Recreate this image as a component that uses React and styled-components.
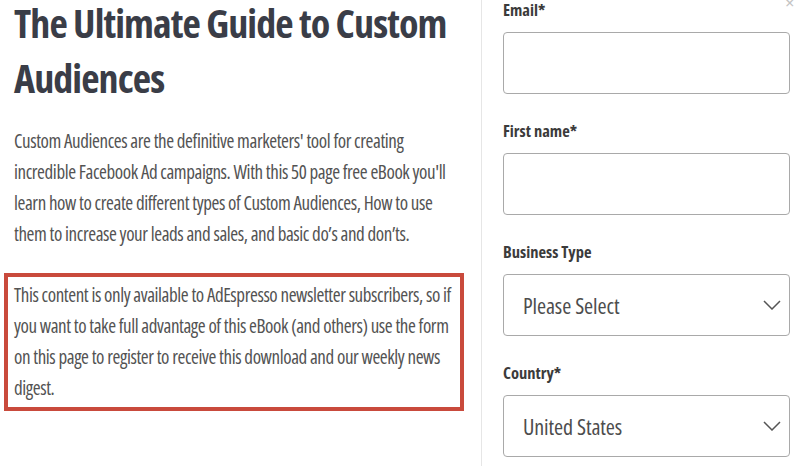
import styled, { createGlobalStyle } from "styled-components";

const Global = createGlobalStyle`
  html, body { margin: 0; background: #fff; }
  body {
    font-family: "Open Sans", "Liberation Sans", sans-serif;
    font-stretch: condensed;
  }
`;

const Page = styled.div`
  width: 800px;
  height: 466px;
  display: flex;
  overflow: hidden;
`;

const Intro = styled.section`
  width: 481px;
  flex-shrink: 0;
  padding-left: 14px;
  box-sizing: border-box;
`;

const Title = styled.h1`
  margin: -5px 0 0;
  font-size: 40px;
  line-height: 55px;
  font-weight: 700;
  letter-spacing: -0.9px;
  color: #3a3d47;
  white-space: nowrap;
`;

const Text = styled.p`
  margin: 0;
  font-size: 19px;
  line-height: 31px;
  letter-spacing: -0.4px;
  color: #535353;
  white-space: nowrap;
`;

const Lead = styled(Text)`
  margin-top: 21px;
`;

const Notice = styled.div`
  width: 460px;
  box-sizing: border-box;
  margin: 23px 0 0 -10px;
  padding: 3px 6px;
  border: 4px solid #c94a3c;
`;

const Form = styled.aside`
  position: relative;
  flex: 1;
  border-left: 1px solid #e6e6e6;
  padding: 0 10px 0 21px;
  display: flex;
  flex-direction: column;
  gap: 27px;
`;

const Close = styled.span`
  position: absolute;
  top: -11px;
  right: 6px;
  font-size: 20px;
  color: #c4c4c4;
`;

const Field = styled.div`
  display: flex;
  flex-direction: column;
  gap: 12px;
`;

const Label = styled.label`
  font-size: 16.5px;
  line-height: 20px;
  font-weight: 700;
  color: #3b3b3b;
`;

const Box = styled.div`
  height: 62px;
  box-sizing: border-box;
  border: 1px solid #a9a9a9;
  border-radius: 4px;
  display: flex;
  align-items: center;
  justify-content: space-between;
  padding: 0 8px 0 19px;
`;

const Value = styled.span`
  font-size: 22px;
  color: #4d4d4d;
  letter-spacing: -0.1px;
`;

const Chevron = () => (
  <svg width="18" height="10" viewBox="0 0 18 10" fill="none">
    <path d="M1 1 L9 9 L17 1" stroke="#555" strokeWidth="1.5" />
  </svg>
);

const fields = [
  { label: "Email*" },
  { label: "First name*" },
  { label: "Business Type", value: "Please Select" },
  { label: "Country*", value: "United States" },
];

export default function App() {
  return (
    <>
      <Global />
      <Page>
        <Intro>
          <Title>
            The Ultimate Guide to Custom
            <br />
            Audiences
          </Title>
          <Lead>
            Custom Audiences are the definitive marketers' tool for creating
            <br />
            incredible Facebook Ad campaigns. With this 50 page free eBook you'll
            <br />
            learn how to create different types of Custom Audiences, How to use
            <br />
            them to increase your leads and sales, and basic do’s and don’ts.
          </Lead>
          <Notice>
            <Text>
              This content is only available to AdEspresso newsletter subscribers, so if
              <br />
              you want to take full advantage of this eBook (and others) use the form
              <br />
              on this page to register to receive this download and our weekly news
              <br />
              digest.
            </Text>
          </Notice>
        </Intro>
        <Form>
          <Close>×</Close>
          {fields.map((f) => (
            <Field key={f.label}>
              <Label>{f.label}</Label>
              <Box>
                {f.value && (
                  <>
                    <Value>{f.value}</Value>
                    <Chevron />
                  </>
                )}
              </Box>
            </Field>
          ))}
        </Form>
      </Page>
    </>
  );
}
